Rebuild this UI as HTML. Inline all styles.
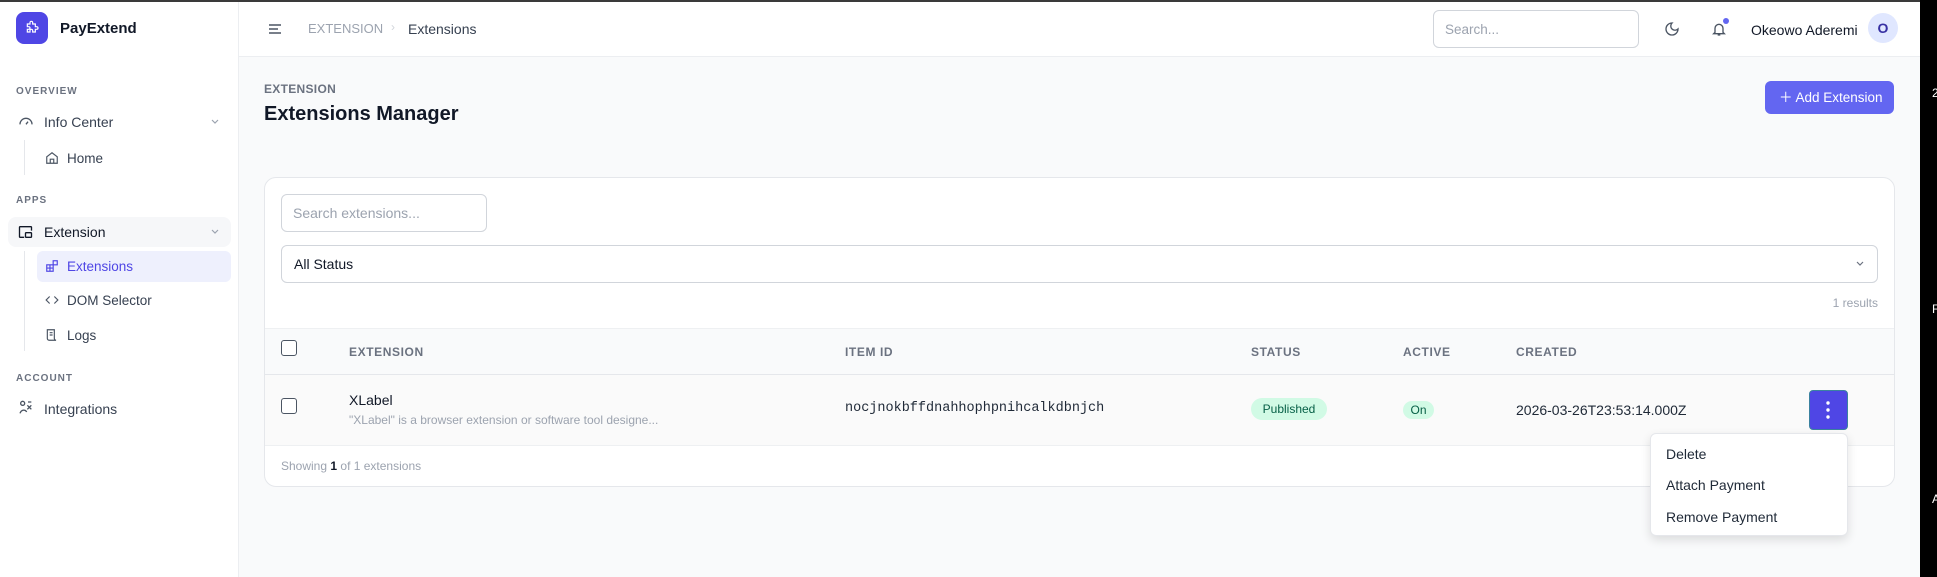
<!DOCTYPE html>
<html><head><meta charset="utf-8"><style>
*{box-sizing:border-box;margin:0;padding:0}
body{width:1937px;height:577px;overflow:hidden;background:#f9fafb;font-family:"Liberation Sans",sans-serif;color:#111827;position:relative}
.abs{position:absolute}
svg{display:block}
.topline{left:0;top:0;width:1920px;height:2px;background:#3a3a3a}
.side{left:0;top:0;width:239px;height:577px;background:#fff;border-right:1px solid #eceef1}
.header{left:239px;top:2px;width:1681px;height:55px;background:#fff;border-bottom:1px solid #eceef1}
.sec{font-size:10px;font-weight:bold;letter-spacing:1px;color:#6b7280;left:16px}
.item{font-size:14px;color:#374151;white-space:nowrap}
.th{font-size:12px;font-weight:bold;letter-spacing:.6px;color:#6b7280;top:345px}
.cb{width:16px;height:16px;border:1.5px solid #4b5563;border-radius:3px;background:#fff}
</style></head><body>
<div class="abs side"></div>
<div class="abs header"></div>
<div class="abs topline"></div>
<!-- logo -->
<div class="abs" style="left:16px;top:12px;width:32px;height:32px;border-radius:8px;background:#4f46e5"></div>
<svg class="abs" style="left:24px;top:20px" width="16" height="16" viewBox="0 0 24 24" fill="none" stroke="#fff" stroke-width="1.8"><path d="M9 4a2 2 0 0 1 4 0v2h4v4h2a2 2 0 0 1 0 4h-2v4h-4v-2a2 2 0 0 0-4 0v2H5v-4h2a2 2 0 0 0 0-4H5V6h4z"/></svg>
<div class="abs" style="left:60px;top:20px;font-size:15px;font-weight:bold">PayExtend</div>
<!-- sidebar -->
<div class="abs sec" style="top:86px">OVERVIEW</div>
<svg class="abs" style="left:18px;top:113px" width="16" height="16" viewBox="0 0 24 24" fill="none" stroke="#4b5563" stroke-width="2"><path d="M3 17a9 9 0 1 1 18 0M12 17l3-4"/></svg>
<div class="abs item" style="left:44px;top:114px">Info Center</div>
<svg class="abs" style="left:210px;top:118px" width="10" height="8" viewBox="0 0 10 8" fill="none" stroke="#9ca3af" stroke-width="1.2"><path d="M2 2l3 3 3-3"/></svg>
<div class="abs" style="left:24px;top:140px;width:1px;height:35px;background:#e5e7eb"></div>
<svg class="abs" style="left:45px;top:151px" width="14" height="14" viewBox="0 0 24 24" fill="none" stroke="#4b5563" stroke-width="2"><path d="M3 10l9-7 9 7v11H3zM9 21v-7h6v7"/></svg>
<div class="abs item" style="left:67px;top:151px;font-size:13.5px">Home</div>
<div class="abs sec" style="top:195px">APPS</div>
<div class="abs" style="left:8px;top:217px;width:223px;height:30px;border-radius:8px;background:#f6f7f9"></div>
<svg class="abs" style="left:17px;top:224px" width="17" height="16" viewBox="0 0 24 24" fill="none" stroke="#111827" stroke-width="2"><path d="M10 20H4a1 1 0 0 1-1-1V5a1 1 0 0 1 1-1h16a1 1 0 0 1 1 1v5"/><rect x="12" y="13" width="9" height="7" rx="1"/></svg>
<div class="abs item" style="left:44px;top:224px;color:#111827">Extension</div>
<svg class="abs" style="left:210px;top:228px" width="10" height="8" viewBox="0 0 10 8" fill="none" stroke="#9ca3af" stroke-width="1.2"><path d="M2 2l3 3 3-3"/></svg>
<div class="abs" style="left:24px;top:251px;width:1px;height:100px;background:#e5e7eb"></div>
<div class="abs" style="left:37px;top:251px;width:194px;height:31px;border-radius:6px;background:#eef0fd"></div>
<svg class="abs" style="left:45px;top:259px" width="14" height="14" viewBox="0 0 24 24" fill="none" stroke="#4f46e5" stroke-width="2"><rect x="3" y="10" width="11" height="11"/><path d="M3 15.5h11M8.5 10v11"/><rect x="14" y="3" width="7" height="7"/></svg>
<div class="abs item" style="left:67px;top:259px;color:#4f46e5;font-size:13.5px">Extensions</div>
<svg class="abs" style="left:45px;top:293px" width="14" height="14" viewBox="0 0 24 24" fill="none" stroke="#4b5563" stroke-width="2"><path d="M8 6l-6 6 6 6M16 6l6 6-6 6"/></svg>
<div class="abs item" style="left:67px;top:293px;font-size:13.5px">DOM Selector</div>
<svg class="abs" style="left:45px;top:328px" width="14" height="14" viewBox="0 0 24 24" fill="none" stroke="#4b5563" stroke-width="2"><path d="M4 3h12v15a3 3 0 0 0 3 3H7a3 3 0 0 1-3-3zM8 8h5M8 12h5M4 3v4"/></svg>
<div class="abs item" style="left:67px;top:328px;font-size:13.5px">Logs</div>
<div class="abs sec" style="top:373px">ACCOUNT</div>
<svg class="abs" style="left:18px;top:400px" width="16" height="16" viewBox="0 0 24 24" fill="none" stroke="#4b5563" stroke-width="2"><circle cx="7" cy="5" r="3"/><path d="M3 20c2-6 8-6 10-2M14 8l6 6M20 8l-6 6M15 3h5"/></svg>
<div class="abs item" style="left:44px;top:401px">Integrations</div>
<!-- header -->
<svg class="abs" style="left:268px;top:22px" width="14" height="14" viewBox="0 0 14 14" stroke="#4b5563" stroke-width="1.6"><path d="M1 3h12M1 7h9M1 11h12"/></svg>
<div class="abs" style="left:308px;top:21px;font-size:13px;color:#9ca3af">EXTENSION</div>
<div class="abs" style="left:391px;top:20px;font-size:12px;color:#d1d5db">›</div>
<div class="abs" style="left:408px;top:21px;font-size:14px;color:#374151">Extensions</div>
<div class="abs" style="left:1433px;top:10px;width:206px;height:38px;border:1px solid #d1d5db;border-radius:6px;background:#fff"></div>
<div class="abs" style="left:1445px;top:22px;font-size:13.5px;color:#9ca3af">Search...</div>
<svg class="abs" style="left:1664px;top:21px" width="16" height="16" viewBox="0 0 24 24" fill="none" stroke="#4b5563" stroke-width="2"><path d="M12 3a6 6 0 0 0 9 9 9 9 0 1 1-9-9z"/></svg>
<svg class="abs" style="left:1711px;top:20px" width="16" height="18" viewBox="0 0 24 24" fill="none" stroke="#4b5563" stroke-width="2"><path d="M6 17V11a6 6 0 0 1 12 0v6l2 2H4zM10 21h4"/></svg>
<div class="abs" style="left:1723px;top:18px;width:6px;height:6px;border-radius:50%;background:#6366f1"></div>
<div class="abs" style="left:1751px;top:22px;font-size:14px;color:#111827">Okeowo Aderemi</div>
<div class="abs" style="left:1868px;top:13px;width:30px;height:30px;border-radius:50%;background:#e0e7ff;color:#3730a3;font-size:14px;font-weight:bold;text-align:center;line-height:30px">O</div>
<!-- content head -->
<div class="abs" style="left:264px;top:82px;font-size:12px;font-weight:bold;color:#6b7280;letter-spacing:.3px">EXTENSION</div>
<div class="abs" style="left:264px;top:103px;font-size:20px;font-weight:bold;color:#111827">Extensions Manager</div>
<div class="abs" style="left:1765px;top:81px;width:129px;height:33px;border-radius:6px;background:#6366f1;color:#fff;font-size:13.5px;line-height:33px;padding-left:14px">＋ Add Extension</div>
<!-- card -->
<div class="abs" style="left:264px;top:177px;width:1631px;height:310px;background:#fff;border:1px solid #e5e7eb;border-radius:12px;overflow:hidden">
 <div class="abs" style="left:0;top:150px;width:1631px;height:47px;background:#f9fafb;border-top:1px solid #eef0f2;border-bottom:1px solid #e5e7eb"></div>
 <div class="abs" style="left:0;top:197px;width:1631px;height:71px;background:#fafafa;border-bottom:1px solid #eef0f2"></div>
</div>
<div class="abs" style="left:281px;top:194px;width:206px;height:38px;border:1px solid #d1d5db;border-radius:6px;background:#fff"></div>
<div class="abs" style="left:293px;top:205px;font-size:14px;color:#9ca3af">Search extensions...</div>
<div class="abs" style="left:281px;top:245px;width:1597px;height:38px;border:1px solid #d1d5db;border-radius:6px;background:#fff"></div>
<div class="abs" style="left:294px;top:256px;font-size:14px;color:#111827">All Status</div>
<svg class="abs" style="left:1855px;top:260px" width="10" height="8" viewBox="0 0 10 8" fill="none" stroke="#6b7280" stroke-width="1.2"><path d="M2 2l3 3 3-3"/></svg>
<div class="abs" style="right:59px;top:296px;font-size:12px;color:#9ca3af">1 results</div>
<div class="abs cb" style="left:281px;top:340px"></div>
<div class="abs th" style="left:349px">EXTENSION</div>
<div class="abs th" style="left:845px">ITEM ID</div>
<div class="abs th" style="left:1251px">STATUS</div>
<div class="abs th" style="left:1403px">ACTIVE</div>
<div class="abs th" style="left:1516px">CREATED</div>
<div class="abs cb" style="left:281px;top:398px"></div>
<div class="abs" style="left:349px;top:392px;font-size:14px;color:#111827">XLabel</div>
<div class="abs" style="left:349px;top:413px;font-size:12px;color:#9ca3af">"XLabel" is a browser extension or software tool designe...</div>
<div class="abs" style="left:845px;top:401px;font-family:'Liberation Mono',monospace;font-size:13.5px;color:#1f2937">nocjnokbffdnahhophpnihcalkdbnjch</div>
<div class="abs" style="left:1251px;top:398px;width:76px;height:22px;border-radius:11px;background:#d1fae5;color:#065f46;font-size:12px;line-height:22px;text-align:center">Published</div>
<div class="abs" style="left:1403px;top:401px;width:31px;height:18px;border-radius:9px;background:#d1fae5;color:#065f46;font-size:12px;line-height:18px;text-align:center">On</div>
<div class="abs" style="left:1516px;top:402px;font-size:14px;color:#1f2937">2026-03-26T23:53:14.000Z</div>
<div class="abs" style="left:1809px;top:390px;width:39px;height:40px;border-radius:4px;background:#4f46e5;border:1px solid #3b82a0"></div>
<svg class="abs" style="left:1826px;top:400px" width="4" height="20" viewBox="0 0 4 20" fill="#fff"><circle cx="2" cy="3" r="1.7"/><circle cx="2" cy="10" r="1.7"/><circle cx="2" cy="17" r="1.7"/></svg>
<div class="abs" style="left:281px;top:459px;font-size:12px;color:#9ca3af">Showing <b style="color:#111827">1</b> of 1 extensions</div>
<!-- dropdown -->
<div class="abs" style="left:1650px;top:433px;width:198px;height:103px;background:#fff;border:1px solid #e5e7eb;border-radius:6px;box-shadow:0 4px 10px rgba(0,0,0,.12)"></div>
<div class="abs" style="left:1666px;top:446px;font-size:14px;color:#1f2937">Delete</div>
<div class="abs" style="left:1666px;top:477px;font-size:14px;color:#1f2937">Attach Payment</div>
<div class="abs" style="left:1666px;top:509px;font-size:14px;color:#1f2937">Remove Payment</div>
<!-- right black strip -->
<div class="abs" style="left:1920px;top:0;width:17px;height:577px;background:#000;overflow:hidden;color:#fff;font-size:12px">
 <div class="abs" style="left:12px;top:86px">2</div>
 <div class="abs" style="left:12px;top:302px">F</div>
 <div class="abs" style="left:12px;top:492px">A</div>
</div>
</body></html>
